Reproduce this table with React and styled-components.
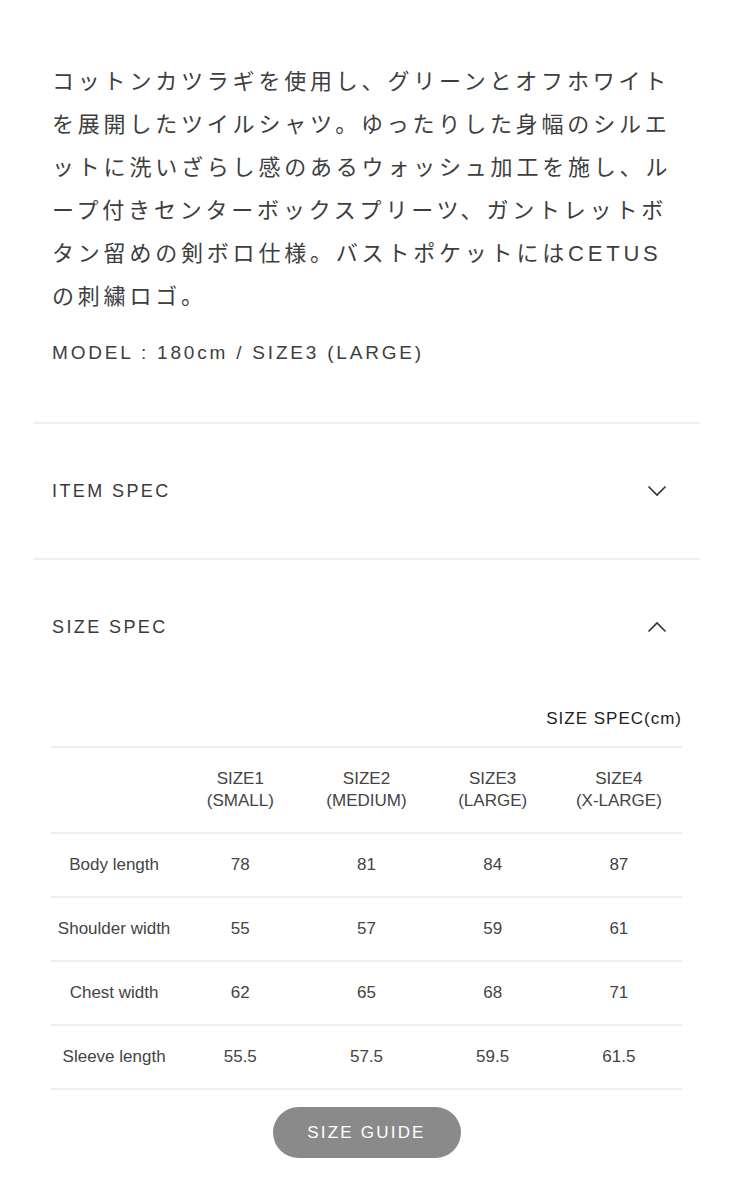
import React from "react";
import styled, { createGlobalStyle } from "styled-components";

const GlobalStyle = createGlobalStyle`
  body {
    margin: 0;
    background: #fff;
    font-family: "Liberation Sans", "Noto Sans CJK JP", sans-serif;
    color: #3c3c3c;
  }
`

const Page = styled.div`
  padding: 60px 34px 40px 33px;
`

const Description = styled.div`
  padding: 0 19px;
`

const Lead = styled.p`
  margin: 0;
  width: 630px;
  font-size: 22px;
  line-height: 43px;
  letter-spacing: 3.8px;
  line-break: normal;
  color: #3e3e3e;
`

const Model = styled.p`
  margin: 23px 0 0;
  font-size: 19px;
  line-height: 24px;
  letter-spacing: 2.8px;
  color: #3e3e3e;
`

const Section = styled.section`
  border-top: 2px solid #eeeeee;
  margin-top: ${(p) => p.$top || 0}px;
`

const SectionHeader = styled.div`
  height: 134px;
  display: flex;
  align-items: center;
  justify-content: space-between;
  padding: 0 33px 0 19px;
`

const SectionTitle = styled.span`
  font-size: 18px;
  letter-spacing: 2.4px;
  color: #3a3a3a;
`

const SectionBody = styled.div`
  padding: 0 18px;
  display: flex;
  flex-direction: column;
  align-items: center;
`

const Caption = styled.div`
  align-self: flex-end;
  margin-top: 14px;
  margin-bottom: 16px;
  font-size: 17px;
  line-height: 22px;
  letter-spacing: 1px;
  color: #1e1e1e;
`

const Table = styled.table`
  width: 100%;
  border-collapse: collapse;
  table-layout: fixed;
  border-top: 2px solid #eeeeee;
`

const HeadCell = styled.th`
  font-weight: normal;
  font-size: 17px;
  line-height: 22px;
  color: #444;
  height: 84px;
  text-align: center;
  border-bottom: 2px solid #eeeeee;
  padding: 0;
`

const Cell = styled.td`
  font-size: 17px;
  color: #444;
  height: 62px;
  text-align: center;
  border-bottom: 2px solid #eeeeee;
  padding: 0;
  white-space: nowrap;
`

const GuideButton = styled.button`
  margin-top: 17px;
  width: 188px;
  height: 51px;
  border: none;
  border-radius: 26px;
  background: #8a8a8a;
  color: #fff;
  font-family: "Liberation Sans", sans-serif;
  font-size: 17px;
  letter-spacing: 2.2px;
  cursor: pointer;
`

const Chevron = ({ up }) => (
  <svg width="20" height="12" viewBox="0 0 20 12" fill="none">
    <polyline
      points={up ? "1.5,10.5 10,2 18.5,10.5" : "1.5,1.5 10,10 18.5,1.5"}
      stroke="#333"
      strokeWidth="1.6"
    />
  </svg>
);

const sizes = [
  ["SIZE1", "(SMALL)"],
  ["SIZE2", "(MEDIUM)"],
  ["SIZE3", "(LARGE)"],
  ["SIZE4", "(X-LARGE)"],
];

const rows = [
  ["Body length", "78", "81", "84", "87"],
  ["Shoulder width", "55", "57", "59", "61"],
  ["Chest width", "62", "65", "68", "71"],
  ["Sleeve length", "55.5", "57.5", "59.5", "61.5"],
];

export default function App() {
  return (
    <Page>
      <GlobalStyle />
      <Description>
        <Lead>
          コットンカツラギを使用し、グリーンとオフホワイトを展開したツイルシャツ。ゆったりした身幅のシルエットに洗いざらし感のあるウォッシュ加工を施し、ループ付きセンターボックスプリーツ、ガントレットボタン留めの剣ボロ仕様。バストポケットにはCETUSの刺繍ロゴ。
        </Lead>
        <Model>MODEL : 180cm / SIZE3 (LARGE)</Model>
      </Description>

      <Section $top={57}>
        <SectionHeader>
          <SectionTitle>ITEM SPEC</SectionTitle>
          <Chevron />
        </SectionHeader>
      </Section>

      <Section>
        <SectionHeader>
          <SectionTitle>SIZE SPEC</SectionTitle>
          <Chevron up />
        </SectionHeader>
        <SectionBody>
          <Caption>SIZE SPEC(cm)</Caption>
          <Table>
            <thead>
              <tr>
                <HeadCell />
                {sizes.map(([name, label]) => (
                  <HeadCell key={name}>
                    {name}
                    <br />
                    {label}
                  </HeadCell>
                ))}
              </tr>
            </thead>
            <tbody>
              {rows.map((row) => (
                <tr key={row[0]}>
                  {row.map((value, i) => (
                    <Cell key={i}>{value}</Cell>
                  ))}
                </tr>
              ))}
            </tbody>
          </Table>
          <GuideButton>SIZE GUIDE</GuideButton>
        </SectionBody>
      </Section>
    </Page>
  );
}
